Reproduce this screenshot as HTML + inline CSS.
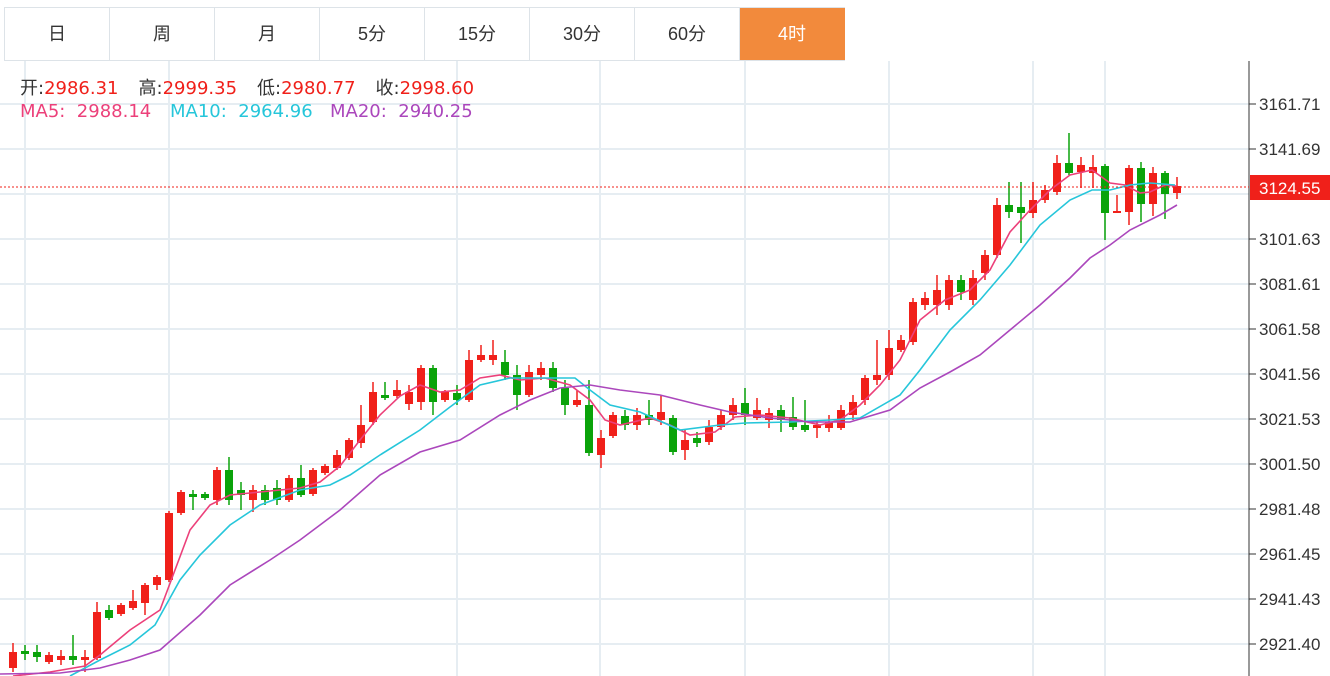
<!DOCTYPE html>
<html><head><meta charset="utf-8"><style>
body{margin:0;width:1330px;height:676px;overflow:hidden;background:#fff;font-family:"Liberation Sans","Noto Sans CJK SC",sans-serif;position:relative}
.tabs{position:absolute;left:4px;top:7px;height:54px;display:flex;border:1px solid #dde3e8;border-right:none;box-sizing:border-box}
.tab{width:105px;height:52px;line-height:52px;text-align:center;font-size:18px;color:#333;border-right:1px solid #dde3e8;box-sizing:border-box}
.tab.on{background:#f28a3c;color:#fff;border-color:#f28a3c}
.info{position:absolute;left:20px;font-size:18px;white-space:nowrap;font-family:"DejaVu Sans","Noto Sans CJK SC",sans-serif}
</style></head><body>
<svg id="c" width="1330" height="676" style="position:absolute;left:0;top:0"></svg>
<div class="tabs"><div class="tab">日</div><div class="tab">周</div><div class="tab">月</div><div class="tab">5分</div><div class="tab">15分</div><div class="tab">30分</div><div class="tab">60分</div><div class="tab on">4时</div></div>
<div class="info" style="top:74px;color:#333">开:<span style="color:#f0201a">2986.31</span><span style="display:inline-block;width:20px"></span>高:<span style="color:#f0201a">2999.35</span><span style="display:inline-block;width:20px"></span>低:<span style="color:#f0201a">2980.77</span><span style="display:inline-block;width:20px"></span>收:<span style="color:#f0201a">2998.60</span></div>
<div class="info" style="top:101px"><span style="position:absolute;left:0;color:#ec407a">MA5:&nbsp;&nbsp;2988.14</span><span style="position:absolute;left:150px;color:#26c6da">MA10:&nbsp;&nbsp;2964.96</span><span style="position:absolute;left:310px;color:#ab47bc">MA20:&nbsp;&nbsp;2940.25</span></div>
<script>
var s='';
var hs=[104,149,194,239,284,329,374,419,464,509,554,599,644];
var labs=['3161.71','3141.69','3121.66','3101.63','3081.61','3061.58','3041.56','3021.53','3001.50','2981.48','2961.45','2941.43','2921.40'];
hs.forEach(function(y,i){s+='<line x1="0" x2="1249" y1="'+y+'" y2="'+y+'" stroke="#e6edf2" stroke-width="2"/>';
 if(i!=2){s+='<line x1="1249" x2="1256" y1="'+y+'" y2="'+y+'" stroke="#333"/><text x="1259" y="'+(y+6)+'" font-size="17" fill="#333" font-family="Liberation Sans">'+labs[i]+'</text>';}});
[25,169,457,600,745,889,1033,1105].forEach(function(x){s+='<line x1="'+x+'" x2="'+x+'" y1="61" y2="676" stroke="#e6edf2" stroke-width="2"/>';});
s+='<line x1="1249" x2="1249" y1="61" y2="676" stroke="#333"/>';
var C=[[13,'r',652,668,643,672],[25,'g',651,654,645,660],[37,'g',652,657,645,662],[49,'r',655,662,652,664],[61,'r',656,660,650,665],[73,'g',656,660,635,665],[85,'r',657,660,650,672],[97,'r',612,658,602,660],[109,'g',610,618,605,620],[121,'r',605,614,603,616],[133,'r',601,608,590,610],[145,'r',585,603,583,615],[157,'r',577,585,575,590],[169,'r',513,580,511,582],[181,'r',492,513,490,515],[193,'g',494,497,490,510],[205,'g',494,498,492,500],[217,'r',470,500,467,505],[229,'g',470,500,457,505],[241,'g',490,495,482,510],[253,'r',490,500,485,512],[265,'g',490,500,485,505],[277,'g',488,500,480,505],[289,'r',478,500,475,502],[301,'g',478,495,465,497],[313,'r',470,494,468,496],[325,'r',466,473,464,475],[337,'r',455,468,450,470],[349,'r',440,458,438,460],[361,'r',425,443,405,448],[373,'r',392,422,382,425],[385,'g',395,398,382,400],[397,'r',390,396,380,398],[409,'r',392,404,385,410],[421,'r',368,402,365,410],[433,'g',368,402,365,415],[445,'r',392,400,390,402],[457,'g',393,400,385,405],[469,'r',360,400,350,402],[481,'r',355,360,345,362],[493,'r',355,360,340,365],[505,'g',362,375,350,380],[517,'g',375,395,365,410],[529,'r',372,395,365,397],[541,'r',368,375,362,380],[553,'g',368,388,362,392],[565,'g',388,405,380,415],[577,'r',400,405,390,407],[589,'g',405,453,380,456],[601,'r',438,455,430,468],[613,'r',415,436,412,438],[625,'g',416,425,410,430],[637,'r',415,425,408,430],[649,'g',415,420,400,425],[661,'r',412,420,395,425],[673,'g',418,452,415,455],[685,'r',440,450,430,460],[697,'g',438,443,432,447],[709,'r',427,442,420,445],[721,'r',415,427,410,430],[733,'r',405,415,398,420],[745,'g',403,415,388,425],[757,'r',410,418,398,420],[769,'r',413,420,408,428],[781,'g',410,420,405,432],[793,'g',417,427,397,430],[805,'g',425,430,400,432],[817,'r',425,428,420,438],[829,'r',422,428,415,432],[841,'r',410,428,405,430],[853,'r',402,415,395,420],[865,'r',378,400,375,405],[877,'r',375,380,340,385],[889,'r',348,375,330,380],[901,'r',340,350,335,352],[913,'r',302,342,298,345],[925,'r',298,305,292,310],[937,'r',290,305,275,315],[949,'r',280,305,275,310],[961,'g',280,292,275,300],[973,'r',278,300,270,305],[985,'r',255,273,250,280],[997,'r',205,255,198,258],[1009,'g',205,212,182,218],[1021,'g',207,213,182,243],[1033,'r',200,213,182,218],[1045,'r',190,200,185,203],[1057,'r',163,192,155,195],[1069,'g',163,173,133,175],[1081,'r',165,172,157,188],[1093,'r',167,173,155,188],[1105,'g',166,213,164,240],[1117,'r',211,213,195,213],[1129,'r',168,212,165,225],[1141,'g',168,204,162,222],[1153,'r',173,204,167,216],[1165,'g',173,194,171,219],[1177,'r',186,193,177,199]];
C.forEach(function(c){var col=c[1]=='r'?'#f0201a':'#0aa30a';var h=Math.max(2,c[3]-c[2]);
 s+='<line x1="'+c[0]+'" x2="'+c[0]+'" y1="'+c[4]+'" y2="'+c[5]+'" stroke="'+col+'" stroke-width="1.5"/><rect x="'+(c[0]-4)+'" y="'+c[2]+'" width="8" height="'+h+'" fill="'+col+'"/>';});
function pl(p,col){s+='<polyline fill="none" stroke="'+col+'" stroke-width="1.6" points="'+p+'"/>';}
pl('13,676 50,672 85,666 100,655 130,630 160,610 175,570 190,530 210,505 230,495 260,492 300,488 320,482 340,466 360,440 380,415 400,396 420,385 440,392 460,390 480,378 500,375 520,380 545,378 570,385 590,400 605,420 620,425 650,418 670,425 690,435 715,432 735,417 760,415 790,418 820,425 840,420 860,405 880,385 900,360 920,320 945,300 970,290 990,270 1010,232 1030,210 1050,190 1070,175 1092,170 1110,183 1125,185 1140,193 1150,192 1165,185 1177,186','#ec407a');
pl('70,676 100,660 130,645 155,625 180,580 200,555 230,525 260,505 300,490 330,485 350,475 380,455 420,430 450,407 480,385 510,378 540,378 575,378 590,390 610,405 640,412 680,430 720,425 745,423 790,422 830,420 860,418 900,395 920,370 950,330 980,300 1010,265 1040,225 1070,200 1092,190 1110,190 1130,185 1150,183 1175,185','#26c6da');
pl('0,674 60,673 100,668 130,660 160,650 200,615 230,585 270,560 300,540 340,510 380,475 420,452 460,440 500,415 530,400 560,388 590,385 620,390 660,395 700,405 730,412 770,418 810,422 850,422 890,410 920,388 950,372 980,355 1010,330 1040,305 1070,278 1090,258 1110,245 1130,230 1160,215 1177,205','#ab47bc');
s+='<line x1="0" x2="1249" y1="187" y2="187" stroke="#f0201a" stroke-dasharray="2,2"/>';
s+='<rect x="1250" y="175" width="80" height="25" fill="#f0201a"/><text x="1259" y="194" font-size="17" fill="#fff" font-family="Liberation Sans">3124.55</text>';
document.getElementById('c').innerHTML=s;
</script>
</body></html>
